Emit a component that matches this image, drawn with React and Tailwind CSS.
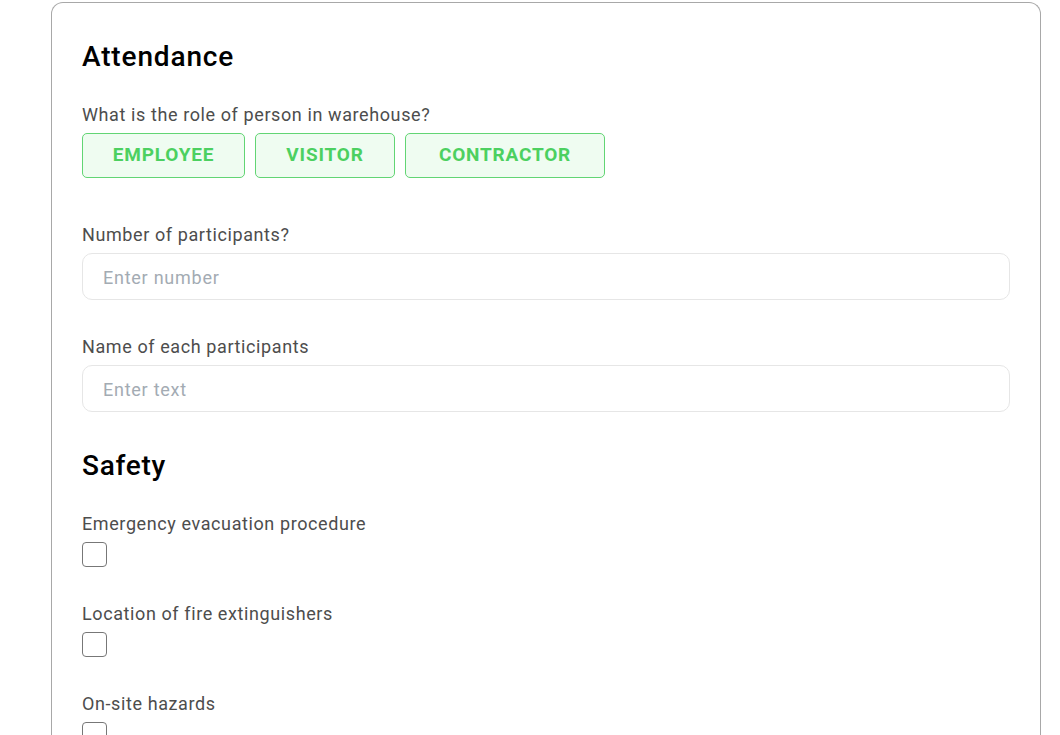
import React from "react";

const Label = ({ children }) => (
  <p className="pt-px text-[18px] leading-6 tracking-[0.6px] text-[#4d4d4d]">{children}</p>
);

const TextInput = ({ placeholder }) => (
  <input
    type="text"
    placeholder={placeholder}
    className="mt-[6px] w-full h-[47px] rounded-[10px] border border-[#e6e6e6] bg-white px-5 pt-px text-[18px] tracking-[0.75px] text-[#333] placeholder:text-[#a3abb3] outline-none"
  />
);

const Check = ({ label }) => (
  <div>
    <Label>{label}</Label>
    <div className="mt-[6px] w-[25px] h-[25px] rounded-[4px] border-[1.5px] border-[#777] bg-white" />
  </div>
);

const RoleButton = ({ children, width }) => (
  <button
    className={`h-[45px] ${width} rounded-[5px] border border-[#62d574] bg-[#effcf1] text-[19px] font-bold uppercase text-[#4cd060] tracking-[0.8px]`}
  >
    {children}
  </button>
);

export default function App() {
  return (
    <div
      className="min-h-screen bg-white pl-[51px] pr-[19px] pt-[2px] overflow-hidden"
      style={{ fontFamily: "Roboto, 'Noto Sans', sans-serif" }}
    >
      <div className="rounded-t-[12px] border border-b-0 border-[#a8a8a8] pl-[30px] pr-[30px] pt-[37px] pb-10 h-[760px]">
        <h2 className="text-[28px] leading-[34px] font-medium tracking-[0.85px] text-black">Attendance</h2>

        <div className="mt-[28px]">
          <Label>What is the role of person in warehouse?</Label>
          <div className="mt-[6px] flex gap-[10px]">
            <RoleButton width="w-[163px]">Employee</RoleButton>
            <RoleButton width="w-[140px]">Visitor</RoleButton>
            <RoleButton width="w-[200px]">Contractor</RoleButton>
          </div>
        </div>

        <div className="mt-[44px]">
          <Label>Number of participants?</Label>
          <TextInput placeholder="Enter number" />
        </div>

        <div className="mt-[34px]">
          <Label>Name of each participants</Label>
          <TextInput placeholder="Enter text" />
        </div>

        <h2 className="mt-[37px] text-[28px] leading-[34px] font-medium tracking-[0.7px] text-black">Safety</h2>

        <div className="mt-[28px] flex flex-col gap-[34px]">
          <Check label="Emergency evacuation procedure" />
          <Check label="Location of fire extinguishers" />
          <Check label="On-site hazards" />
        </div>
      </div>
    </div>
  );
}
